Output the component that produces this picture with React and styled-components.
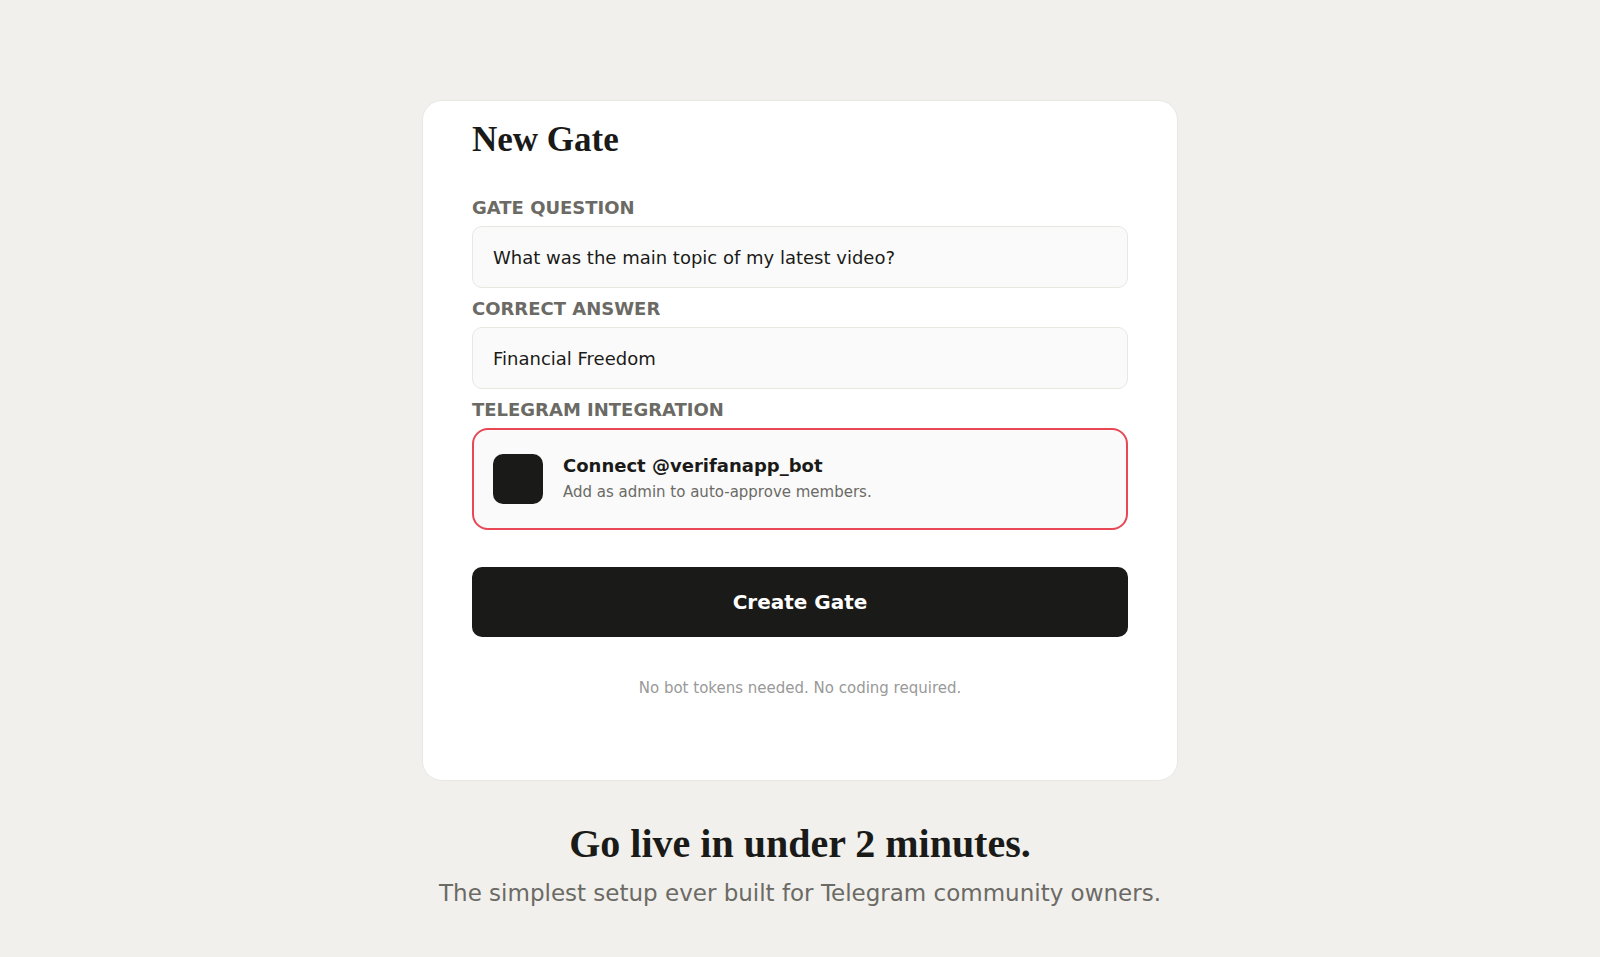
import React, { useState } from 'react';
import styled, { createGlobalStyle } from 'styled-components';

const colors = {
	page: '#f1f0ec',
	ink: '#1a1a18',
	muted: '#6b6a65',
	faint: '#999999',
	border: '#e8e7e1',
	field: '#fafafa',
	accent: '#e84855',
};

const App = () => {
	const [question, setQuestion] = useState('What was the main topic of my latest video?');
	const [answer, setAnswer] = useState('Financial Freedom');

	const handleSubmit = (e) => {
		e.preventDefault();
	};

	return (
		<Page>
			<GlobalStyle />
			<GateCard onSubmit={handleSubmit}>
				<CardTitle>New Gate</CardTitle>
				<Field>
					<Label htmlFor="question">GATE QUESTION</Label>
					<TextInput id="question" value={question} onChange={(e) => setQuestion(e.target.value)} />
				</Field>
				<Field>
					<Label htmlFor="answer">CORRECT ANSWER</Label>
					<TextInput id="answer" value={answer} onChange={(e) => setAnswer(e.target.value)} />
				</Field>
				<Field>
					<Label as="div" id="integration">
						TELEGRAM INTEGRATION
					</Label>
					<BotBox role="group" aria-labelledby="integration">
						<BotAvatar />
						<div>
							<BotName>Connect @verifanapp_bot</BotName>
							<BotHint>Add as admin to auto-approve members.</BotHint>
						</div>
					</BotBox>
				</Field>
				<SubmitButton type="submit">Create Gate</SubmitButton>
				<Note>No bot tokens needed. No coding required.</Note>
			</GateCard>
			<Headline>Go live in under 2 minutes.</Headline>
			<Subline>The simplest setup ever built for Telegram community owners.</Subline>
		</Page>
	);
};
export default App;

const GlobalStyle = createGlobalStyle`
	* {
		box-sizing: border-box;
	}
	body {
		margin: 0;
		background: ${colors.page};
		color: ${colors.ink};
		font-family: Verdana, 'DejaVu Sans', sans-serif;
	}
`;

const Page = styled.main`
	display: flex;
	flex-direction: column;
	align-items: center;
	padding: 100px 24px 40px;
`;

const GateCard = styled.form`
	width: 100%;
	max-width: 756px;
	padding: 17px 49px 82px;
	border: 1px solid ${colors.border};
	border-radius: 20px;
	background: #ffffff;
`;

const CardTitle = styled.h1`
	margin: 0 0 35px;
	font-family: 'Liberation Serif', serif;
	font-size: 35px;
	line-height: 44px;
	font-weight: bold;
`;

const Field = styled.div`
	margin-bottom: 10px;
`;

const Label = styled.label`
	display: block;
	margin-bottom: 7px;
	font-size: 18px;
	line-height: 22px;
	font-weight: bold;
	color: ${colors.muted};
`;

const TextInput = styled.input`
	display: block;
	width: 100%;
	height: 62px;
	padding: 0 20px;
	border: 1px solid ${colors.border};
	border-radius: 10px;
	background: ${colors.field};
	color: ${colors.ink};
	font-family: inherit;
	font-size: 18px;
`;

const BotBox = styled.div`
	display: flex;
	align-items: center;
	gap: 20px;
	min-height: 102px;
	padding: 0 19px;
	border: 2px solid ${colors.accent};
	border-radius: 16px;
	background: ${colors.field};
`;

const BotAvatar = styled.div`
	flex: none;
	width: 50px;
	height: 50px;
	border-radius: 10px;
	background: ${colors.ink};
`;

const BotName = styled.div`
	font-size: 18px;
	line-height: 26px;
	font-weight: bold;
`;

const BotHint = styled.div`
	font-size: 15px;
	line-height: 26px;
	color: ${colors.muted};
`;

const SubmitButton = styled.button`
	display: block;
	width: 100%;
	height: 70px;
	margin-top: 37px;
	border: none;
	border-radius: 10px;
	background: ${colors.ink};
	color: #ffffff;
	font-family: inherit;
	font-size: 20px;
	font-weight: bold;
	cursor: pointer;
`;

const Note = styled.p`
	margin: 41px 0 0;
	font-size: 15px;
	line-height: 20px;
	text-align: center;
	color: ${colors.faint};
`;

const Headline = styled.h2`
	margin: 38px 0 0;
	font-family: 'Liberation Serif', serif;
	font-size: 40px;
	line-height: 50px;
	font-weight: bold;
	text-align: center;
`;

const Subline = styled.p`
	margin: 8px 0 0;
	font-size: 23px;
	line-height: 32px;
	text-align: center;
	color: ${colors.muted};
`;
